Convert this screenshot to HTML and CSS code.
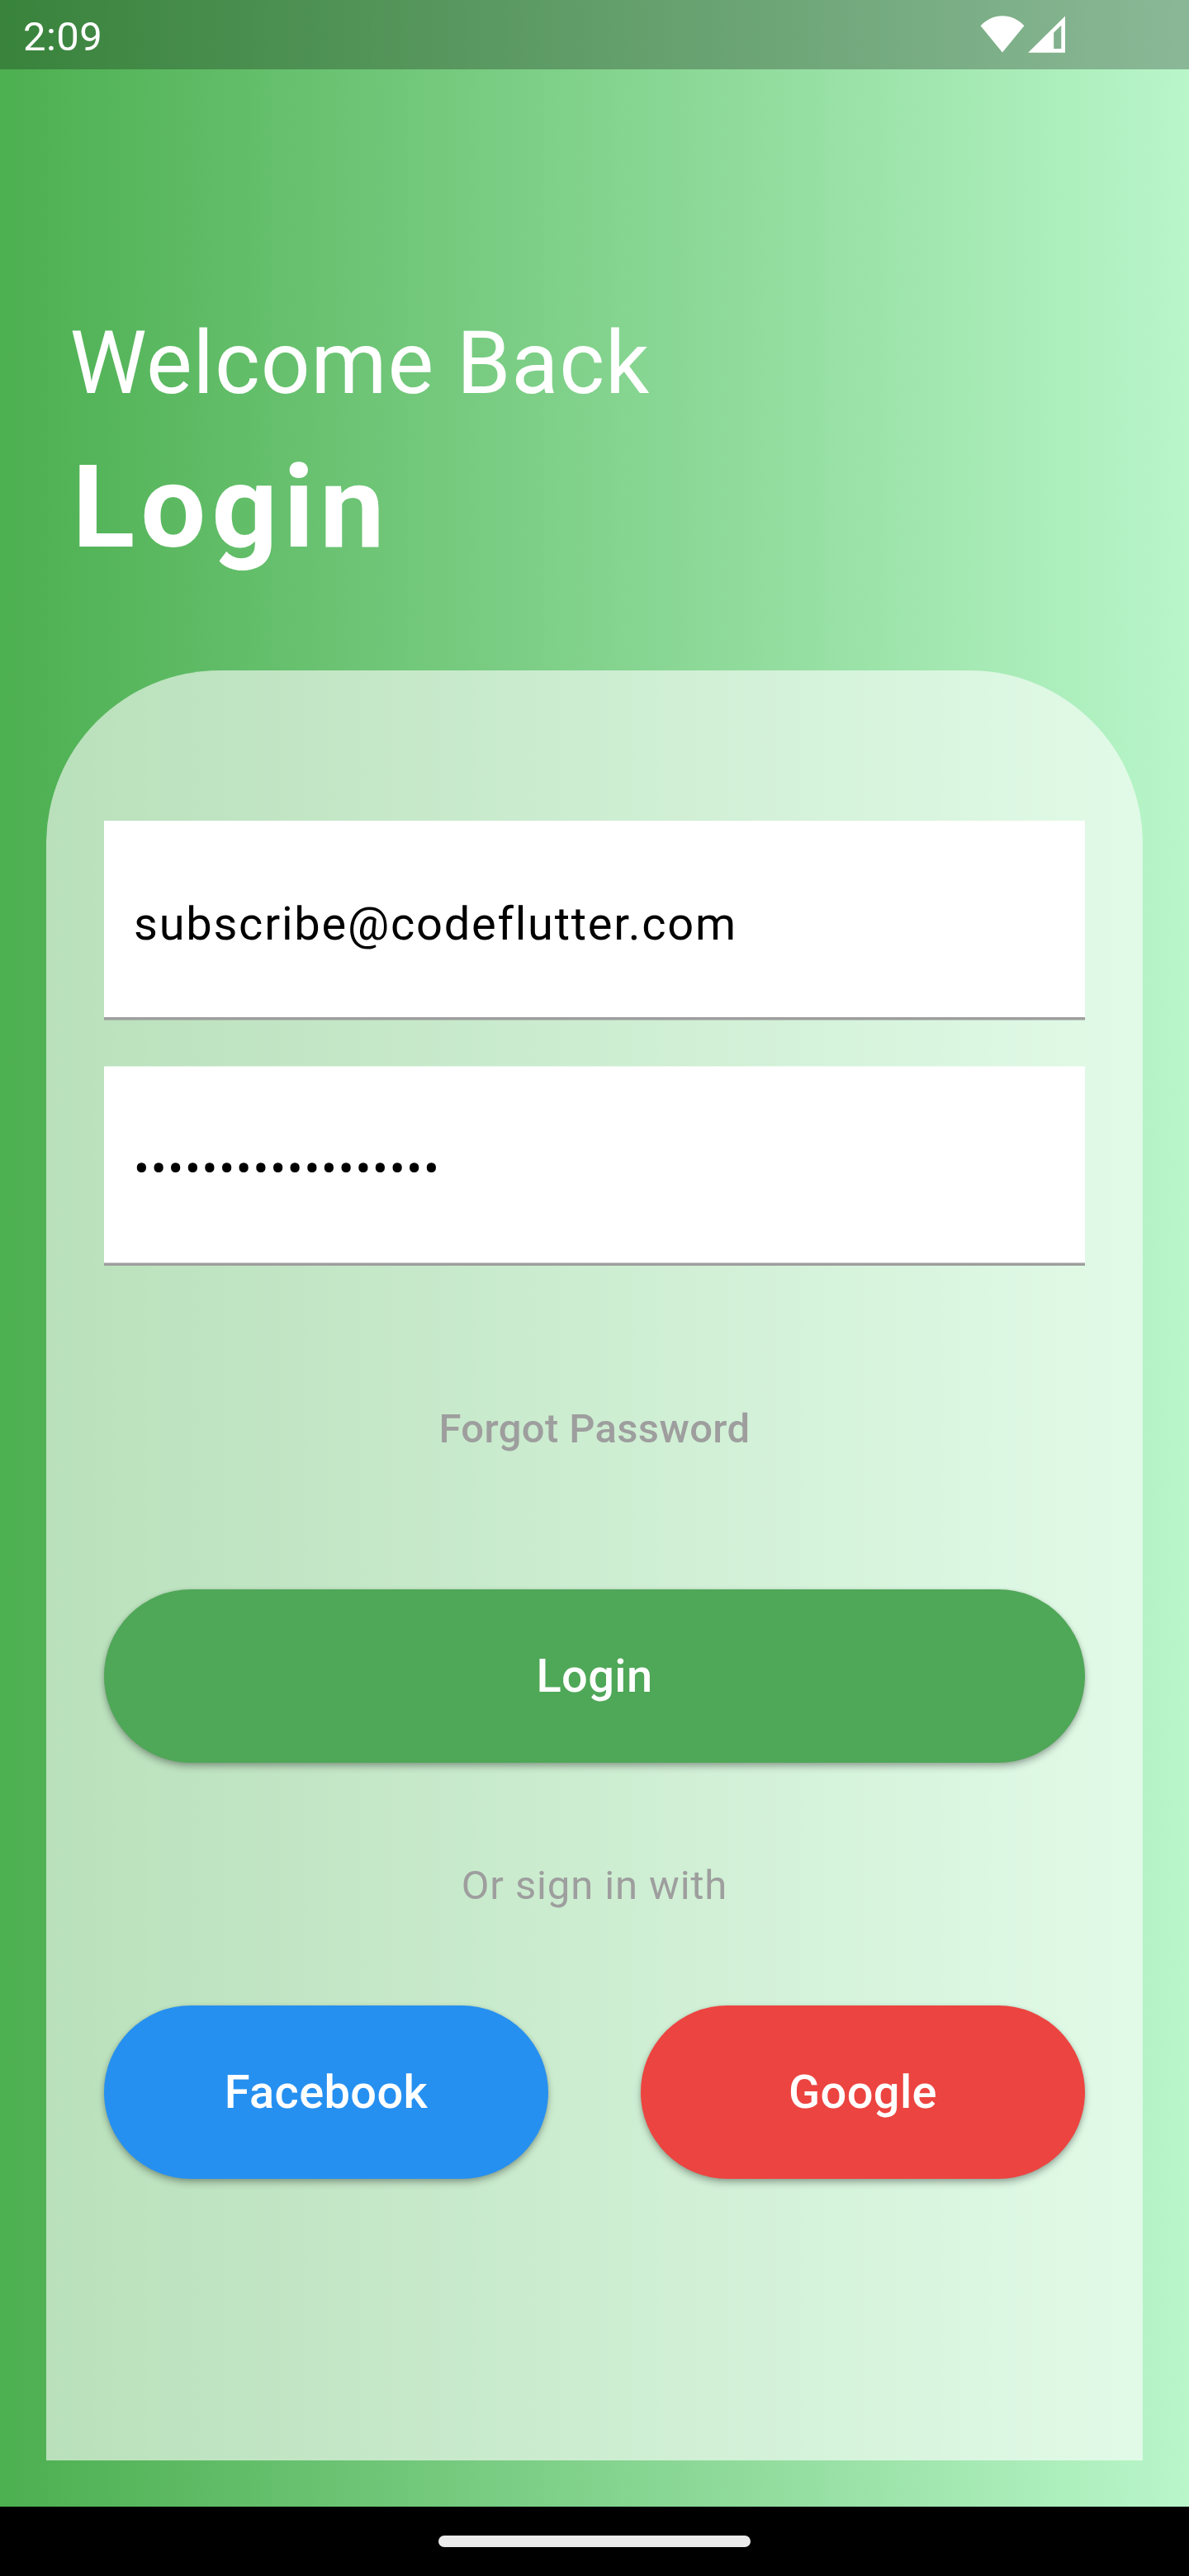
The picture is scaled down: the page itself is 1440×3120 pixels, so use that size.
FILE: index.html
```html
<!DOCTYPE html>
<html lang="en">
<head>
  <meta charset="utf-8">
  <title>Login</title>
  <link rel="stylesheet" href="styles.css">
</head>
<body>
  <div class="screen">
    <div class="status-bar">
      <span class="clock">2:09</span>
      <div class="status-icons">
        <svg class="wifi" width="54" height="46" viewBox="0 0 54 46" fill="#fff"><path d="M27 45.6 0.6 13.3C7.5 5.8 16.500 1.300 27 1.300S46.500 5.800 53.400 13.300Z"/></svg>
        <svg class="signal" width="46" height="46" viewBox="0 0 46 46" fill="#fff"><path fill-rule="evenodd" d="M0.200 45.800 45 1.600V45.800ZM31.200 21.400V41H40.300V12.700Z"/></svg>
      </div>
    </div>
    <header class="heading">
      <p class="welcome">Welcome Back</p>
      <h1 class="title">Login</h1>
    </header>
    <main class="card">
      <div class="fields">
        <div class="field">subscribe@codeflutter.com</div>
        <div class="field field-password">••••••••••••••••••</div>
      </div>
      <a class="forgot">Forgot Password</a>
      <button class="button button-login" type="button">Login</button>
      <p class="divider-text">Or sign in with</p>
      <div class="social">
        <button class="button button-facebook" type="button">Facebook</button>
        <button class="button button-google" type="button">Google</button>
      </div>
    </main>
  </div>
  <div class="nav-bar"><div class="nav-handle"></div></div>
</body>
</html>
```
FILE: styles.css
```css
* {
  box-sizing: border-box;
}

body {
  margin: 0;
  width: 1440px;
  font-family: Roboto, sans-serif;
  background: #000;
}

p,
h1 {
  margin: 0;
}

.screen {
  height: 3036px;
  background: linear-gradient(to right, #4caf50, #b9f6ca);
}

.status-bar {
  display: flex;
  justify-content: space-between;
  align-items: flex-start;
  height: 84px;
  padding: 16px 149px 0 28px;
  background: rgba(0, 0, 0, 0.25);
  color: #fff;
}

.clock {
  font-size: 49px;
  line-height: 57px;
  letter-spacing: 0.4px;
}

.status-icons {
  display: flex;
  gap: 4px;
  padding-top: 2px;
}

.status-icons svg {
  display: block;
}

.heading {
  display: flex;
  flex-direction: column;
  gap: 30px;
  height: 728px;
  padding: 295px 84px 0;
  color: #fff;
}

.welcome {
  padding-left: 0.5px;
  font-size: 105px;
  line-height: 123px;
  letter-spacing: 0.875px;
}

.title {
  padding-left: 3.5px;
  font-size: 140px;
  font-weight: 700;
  line-height: 164px;
  letter-spacing: 7px;
}

.card {
  display: flex;
  flex-direction: column;
  height: 2168px;
  margin: 0 56px;
  padding: 182px 70px 0;
  border-radius: 210px 210px 0 0;
  background: rgba(255, 255, 255, 0.6);
}

.fields {
  display: flex;
  flex-direction: column;
  gap: 55px;
}

.field {
  height: 242px;
  padding: 92px 36px 0;
  background: linear-gradient(#fff 238px, #9e9e9e 238px, #9e9e9e 241px, rgba(158, 158, 158, 0.5) 241px);
  color: #000;
  font-size: 56px;
  line-height: 66px;
  letter-spacing: 1.75px;
}

.field-password {
  background: linear-gradient(rgba(255, 255, 255, 0.5) 1px, #fff 1px, #fff 238px, #cecece 238px, #cecece 239px, #9e9e9e 239px);
}

.forgot,
.divider-text {
  color: #9e9e9e;
  font-size: 49px;
  line-height: 57px;
  text-align: center;
}

.forgot {
  margin: 169px 0 166px;
  font-weight: 500;
  letter-spacing: 0.35px;
}

.divider-text {
  margin: 120px 0 117px;
  letter-spacing: 0.875px;
}

.button {
  height: 210px;
  padding: 0;
  border: 0;
  border-radius: 105px;
  color: #fff;
  font: 500 56px/66px Roboto, sans-serif;
  letter-spacing: 0.35px;
  box-shadow: 0 5px 8px rgba(0, 0, 0, 0.26), 0 1px 5px rgba(0, 0, 0, 0.12);
}

.button-login {
  background: #4fa758;
}

.social {
  display: grid;
  grid-template-columns: 1fr 1fr;
  gap: 112px;
}

.button-facebook {
  background: #2690f0;
}

.button-google {
  background: #ec4440;
}

.nav-bar {
  display: flex;
  justify-content: center;
  height: 84px;
  padding-top: 35px;
  background: #000;
}

.nav-handle {
  width: 378px;
  height: 14px;
  border-radius: 7px;
  background: #ebebeb;
}
```
